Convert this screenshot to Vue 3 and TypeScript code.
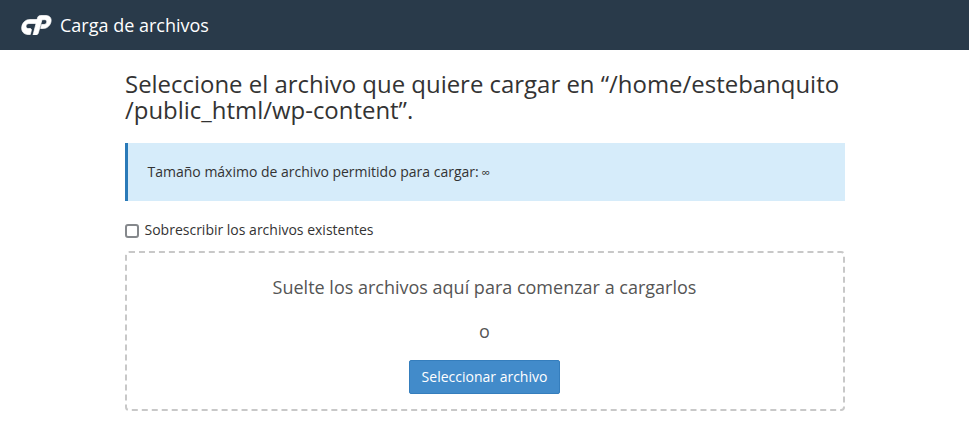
<template>
  <div class="page">
    <header class="topbar">
      <svg class="logo" viewBox="0 0 31 20.500" width="31" height="20.500" aria-hidden="true">
        <path d="M17 4.500 16 8.500H8C6.300 8.500 5.200 9.600 5 11 4.800 12.500 5.800 13.500 7.200 13.500H9C10 13.500 10.600 14.200 10.400 15.200L9.300 19.500H7C2.800 19.500 0 16.200.8 11.600 1.500 7.400 4.800 4.500 8.800 4.500Z" fill="#fff" stroke="#fff" stroke-width=".7" />
        <path d="M12 20 16.500 3C16.900 1.500 17.800.5 19.500.5H25C28.600.5 30.800 3.300 30 6.800 29.200 10.600 26 13.500 22.400 13.500H19.600L20.600 9.500H23C24.500 9.500 25.400 8.500 25.700 7.200 26 5.800 25.200 4.700 23.800 4.700H21L17.400 17.700C17 19.200 16 20 14.500 20Z" fill="#fff" stroke="#fff" stroke-width=".7" />
      </svg>
      <span class="title">Carga de archivos</span>
    </header>

    <main class="content">
      <h1 class="heading">Seleccione el archivo que quiere cargar en “/home/estebanquito<br />/public_html/wp-content”.</h1>

      <div class="notice"><span>Tamaño máximo de archivo permitido para cargar: <span class="infinity">∞</span></span></div>

      <label class="overwrite">
        <input v-model="overwrite" type="checkbox" class="check" />
        <span>Sobrescribir los archivos existentes</span>
      </label>

      <section class="dropzone">
        <h2 class="drop-title">Suelte los archivos aquí para comenzar a cargarlos</h2>
        <p class="or">o</p>
        <button type="button" class="select-btn">Seleccionar archivo</button>
      </section>
    </main>
  </div>
</template>

<script setup lang="ts">
import { ref } from "vue";

const overwrite = ref(false);
</script>

<style scoped>
.page {
  font-family: "Open Sans", "Liberation Sans", sans-serif;
  color: #333;
  background: #fff;
  min-height: 442px;
}

.topbar {
  height: 50px;
  background: #293a4a;
  display: flex;
  align-items: center;
  padding-left: 21px;
  color: #fff;
}

.logo {
  margin-right: 8px;
}

.title {
  font-size: 18px;
}

.content {
  width: 720px;
  margin-left: 125px;
}

.heading {
  margin: 21px 0 19px;
  font-size: 23.94px;
  line-height: 26.4px;
  font-weight: 400;
  color: #333;
}

.notice {
  height: 58px;
  box-sizing: border-box;
  display: flex;
  align-items: center;
  padding-left: 19.500px;
  background: #d6ecfa;
  border-left: 3px solid #2a7ab8;
  font-size: 14px;
}

.infinity {
  font-size: 12px;
  margin-left: -1px;
}

.overwrite {
  display: flex;
  align-items: center;
  margin-top: 19px;
  height: 20px;
  font-size: 14px;
}

.check {
  appearance: none;
  flex: none;
  width: 14px;
  height: 14px;
  margin: 3px 5.500px 0 0;
  border: 2px solid #85888c;
  border-radius: 3px;
  background: #fff;
}

.dropzone {
  margin-top: 11px;
  height: 160px;
  box-sizing: border-box;
  padding-right: 1px;
  border: 2px dashed #c8c8c8;
  border-radius: 4px;
  display: flex;
  flex-direction: column;
  align-items: center;
}

.drop-title {
  margin: 22px 0 0;
  font-size: 18px;
  line-height: 24px;
  font-weight: 400;
  color: #555;
}

.or {
  margin: 21px 0 0;
  font-size: 18px;
  line-height: 22px;
  color: #555;
}

.select-btn {
  margin-top: 18px;
  width: 151px;
  height: 34px;
  padding: 0;
  background: #428bca;
  border: 1px solid #357ebd;
  border-radius: 2px;
  color: #fff;
  font-family: inherit;
  font-size: 14px;
}
</style>
